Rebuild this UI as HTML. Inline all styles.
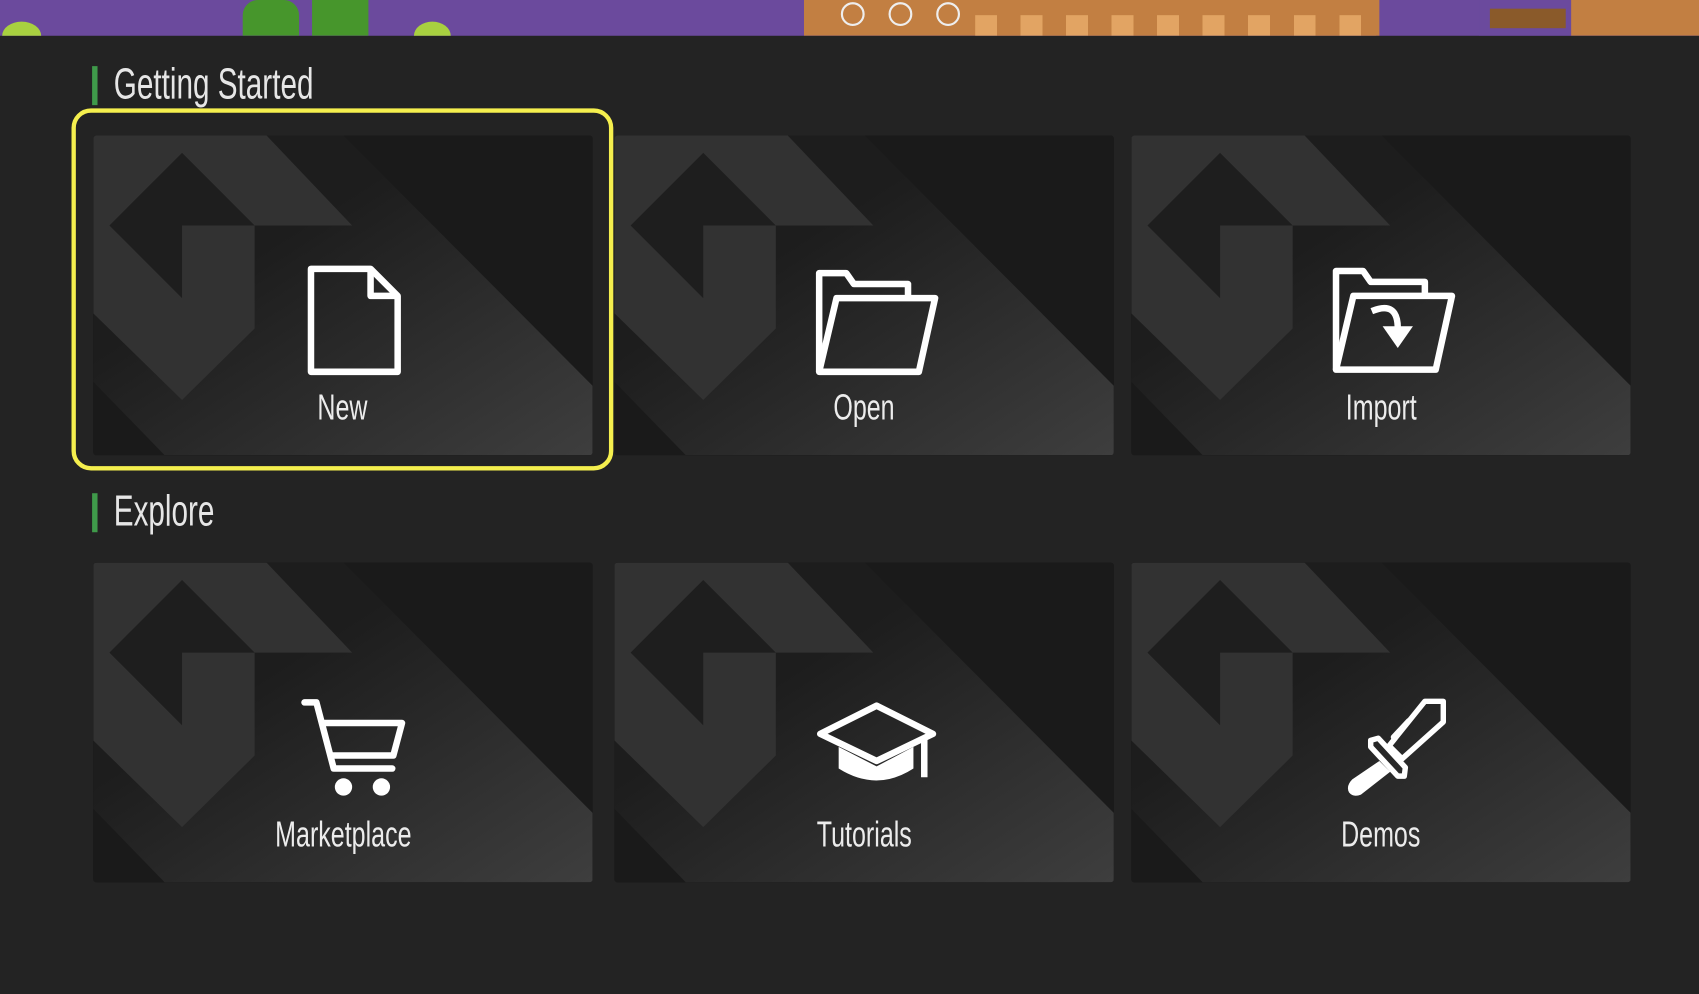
<!DOCTYPE html>
<html><head><meta charset="utf-8">
<style>
html,body{margin:0;padding:0;background:#232323;overflow:hidden;width:1699px;height:994px}
#w{position:absolute;left:0;top:0;width:1568px;height:917px;transform:scale(1.08355,1.0840);transform-origin:0 0;background:#232323;font-family:"Liberation Sans",sans-serif}
.card{position:absolute;width:461px;height:295px;border-radius:3px;overflow:hidden;background:#1a1a1a}
.card svg{position:absolute;left:0;top:0}
.lbl{position:absolute;left:0;width:461px;text-align:center;color:#ececec;font-size:33px;top:232px}
.lbl span{display:inline-block;transform:scaleX(0.7);transform-origin:center}
.h{position:absolute;left:85px;border-left:5px solid #3f9a4a;height:36px;}
.h span{position:absolute;left:15px;top:-5px;color:#e6e6e6;font-size:40px;white-space:nowrap;display:inline-block;transform:scaleX(0.685);transform-origin:0 0}
#ban{position:absolute;left:0;top:0;width:1568px;height:33px;overflow:hidden;background:#6b4a9d}
#ban div{position:absolute}
</style></head><body>
<div id="w">
<div id="ban">
<div style="left:224px;top:0;width:52px;height:33px;background:#47962c;border-radius:14px 14px 0 0"></div>
<div style="left:288px;top:0;width:52px;height:33px;background:#47962c"></div>
<div style="left:2px;top:20px;width:36px;height:26px;border-radius:50%;background:#a8d040"></div>
<div style="left:382px;top:20px;width:34px;height:26px;border-radius:50%;background:#a8d040"></div>
<div style="left:742px;top:0;width:531px;height:33px;background:#c27f42"></div>
<div style="left:900px;top:14px;width:370px;height:19px;background:repeating-linear-gradient(90deg,#e2a463 0 20px,#c27f42 20px 42px)"></div>
<div style="left:776px;top:2px;width:18px;height:18px;border:2px solid #eee;border-radius:50%"></div>
<div style="left:820px;top:2px;width:18px;height:18px;border:2px solid #eee;border-radius:50%"></div>
<div style="left:864px;top:2px;width:18px;height:18px;border:2px solid #eee;border-radius:50%"></div>
<div style="left:1365px;top:0;width:85px;height:33px;background:#6b4a9d"></div>
<div style="left:1375px;top:8px;width:70px;height:18px;background:#8a5a2a"></div>
<div style="left:1450px;top:0;width:118px;height:33px;background:#c27f42"></div>
</div>

<div class="h" style="top:61px"><span>Getting Started</span></div>
<div class="h" style="top:455px"><span>Explore</span></div>

<div style="position:absolute;left:66px;top:100px;width:492px;height:326px;border:4px solid #f5ef4e;border-radius:18px"></div>

<svg width="0" height="0" style="position:absolute">
<defs>
<linearGradient id="g" x1="0" y1="0" x2="1" y2="1">
<stop offset="0.35" stop-color="#1d1d1d"/><stop offset="1" stop-color="#3e3e3e"/>
</linearGradient>
<g id="bg">
<rect width="461" height="295" fill="#1a1a1a"/>
<polygon points="231,0 461,231 461,295 66,295 0,227 0,0" fill="url(#g)"/>
<polygon points="0,0 160,0 239,83 149,83 149,178 82,244 0,164" fill="#323232"/>
<polygon points="82,16 149,83 82,83 82,150 15,83" fill="#1e1e1e"/>
</g>
</defs></svg>

<div class="card" style="left:86px;top:125px"><svg width="461" height="295"><use href="#bg"/>
<g fill="none" stroke="#fff" stroke-width="6" stroke-linejoin="round"><path d="M201,123 H256 L281,148 V218 H201 Z"/><path d="M256,123 V148 H281"/></g></svg>
<div class="lbl"><span>New</span></div></div>

<div class="card" style="left:567px;top:125px"><svg width="461" height="295"><use href="#bg"/>
<g fill="none" stroke="#fff" stroke-width="6" stroke-linejoin="round"><path d="M189,218 V127 H214 L221,137 H271 V150"/><path d="M189,218 L205,150 H296 L281,218 Z"/></g></svg>
<div class="lbl"><span>Open</span></div></div>

<div class="card" style="left:1044px;top:125px"><svg width="461" height="295"><use href="#bg"/>
<g fill="none" stroke="#fff" stroke-width="6" stroke-linejoin="round"><path d="M189,216 V125 H214 L221,135 H271 V148"/><path d="M189,216 L205,148 H296 L281,216 Z"/><path d="M222,162 Q246,152 246,178"/></g>
<polygon points="232,176 260,176 246,196" fill="#fff"/></svg>
<div class="lbl"><span>Import</span></div></div>

<div class="card" style="left:86px;top:519px"><svg width="461" height="295"><use href="#bg"/>
<g fill="none" stroke="#fff" stroke-width="6" stroke-linejoin="round" stroke-linecap="round"><path d="M195,129 H206 L222,190 H276"/><path d="M212,148 H285 L277,178 H220"/></g>
<circle cx="231" cy="207" r="8" fill="#fff"/><circle cx="266" cy="207" r="8" fill="#fff"/></svg>
<div class="lbl"><span>Marketplace</span></div></div>

<div class="card" style="left:567px;top:519px"><svg width="461" height="295"><use href="#bg"/>
<g fill="none" stroke="#fff" stroke-width="6" stroke-linejoin="round"><path d="M242,132 L294,158 L242,183 L190,158 Z"/><path d="M286,162 V198"/></g>
<path d="M207,170 L242,188 L276,170 V190 Q242,212 207,190 Z" fill="#fff"/></svg>
<div class="lbl"><span>Tutorials</span></div></div>

<div class="card" style="left:1044px;top:519px"><svg width="461" height="295"><use href="#bg"/>
<g fill="none" stroke="#fff" stroke-width="5" stroke-linejoin="round" stroke-linecap="round"><path d="M271,128 L288,128 L288,147 L250,181 L238,169 Z"/><path d="M256,146 L242,161"/><path d="M228,162 L253,189 L252,197 L246,197 L221,170 L221,164 Z"/></g>
<path d="M229,183 L239,193 L212,214 Q205,217 201,212 Q198,206 204,200 Z" fill="#fff"/></svg>
<div class="lbl"><span>Demos</span></div></div>
</div>
</body></html>
